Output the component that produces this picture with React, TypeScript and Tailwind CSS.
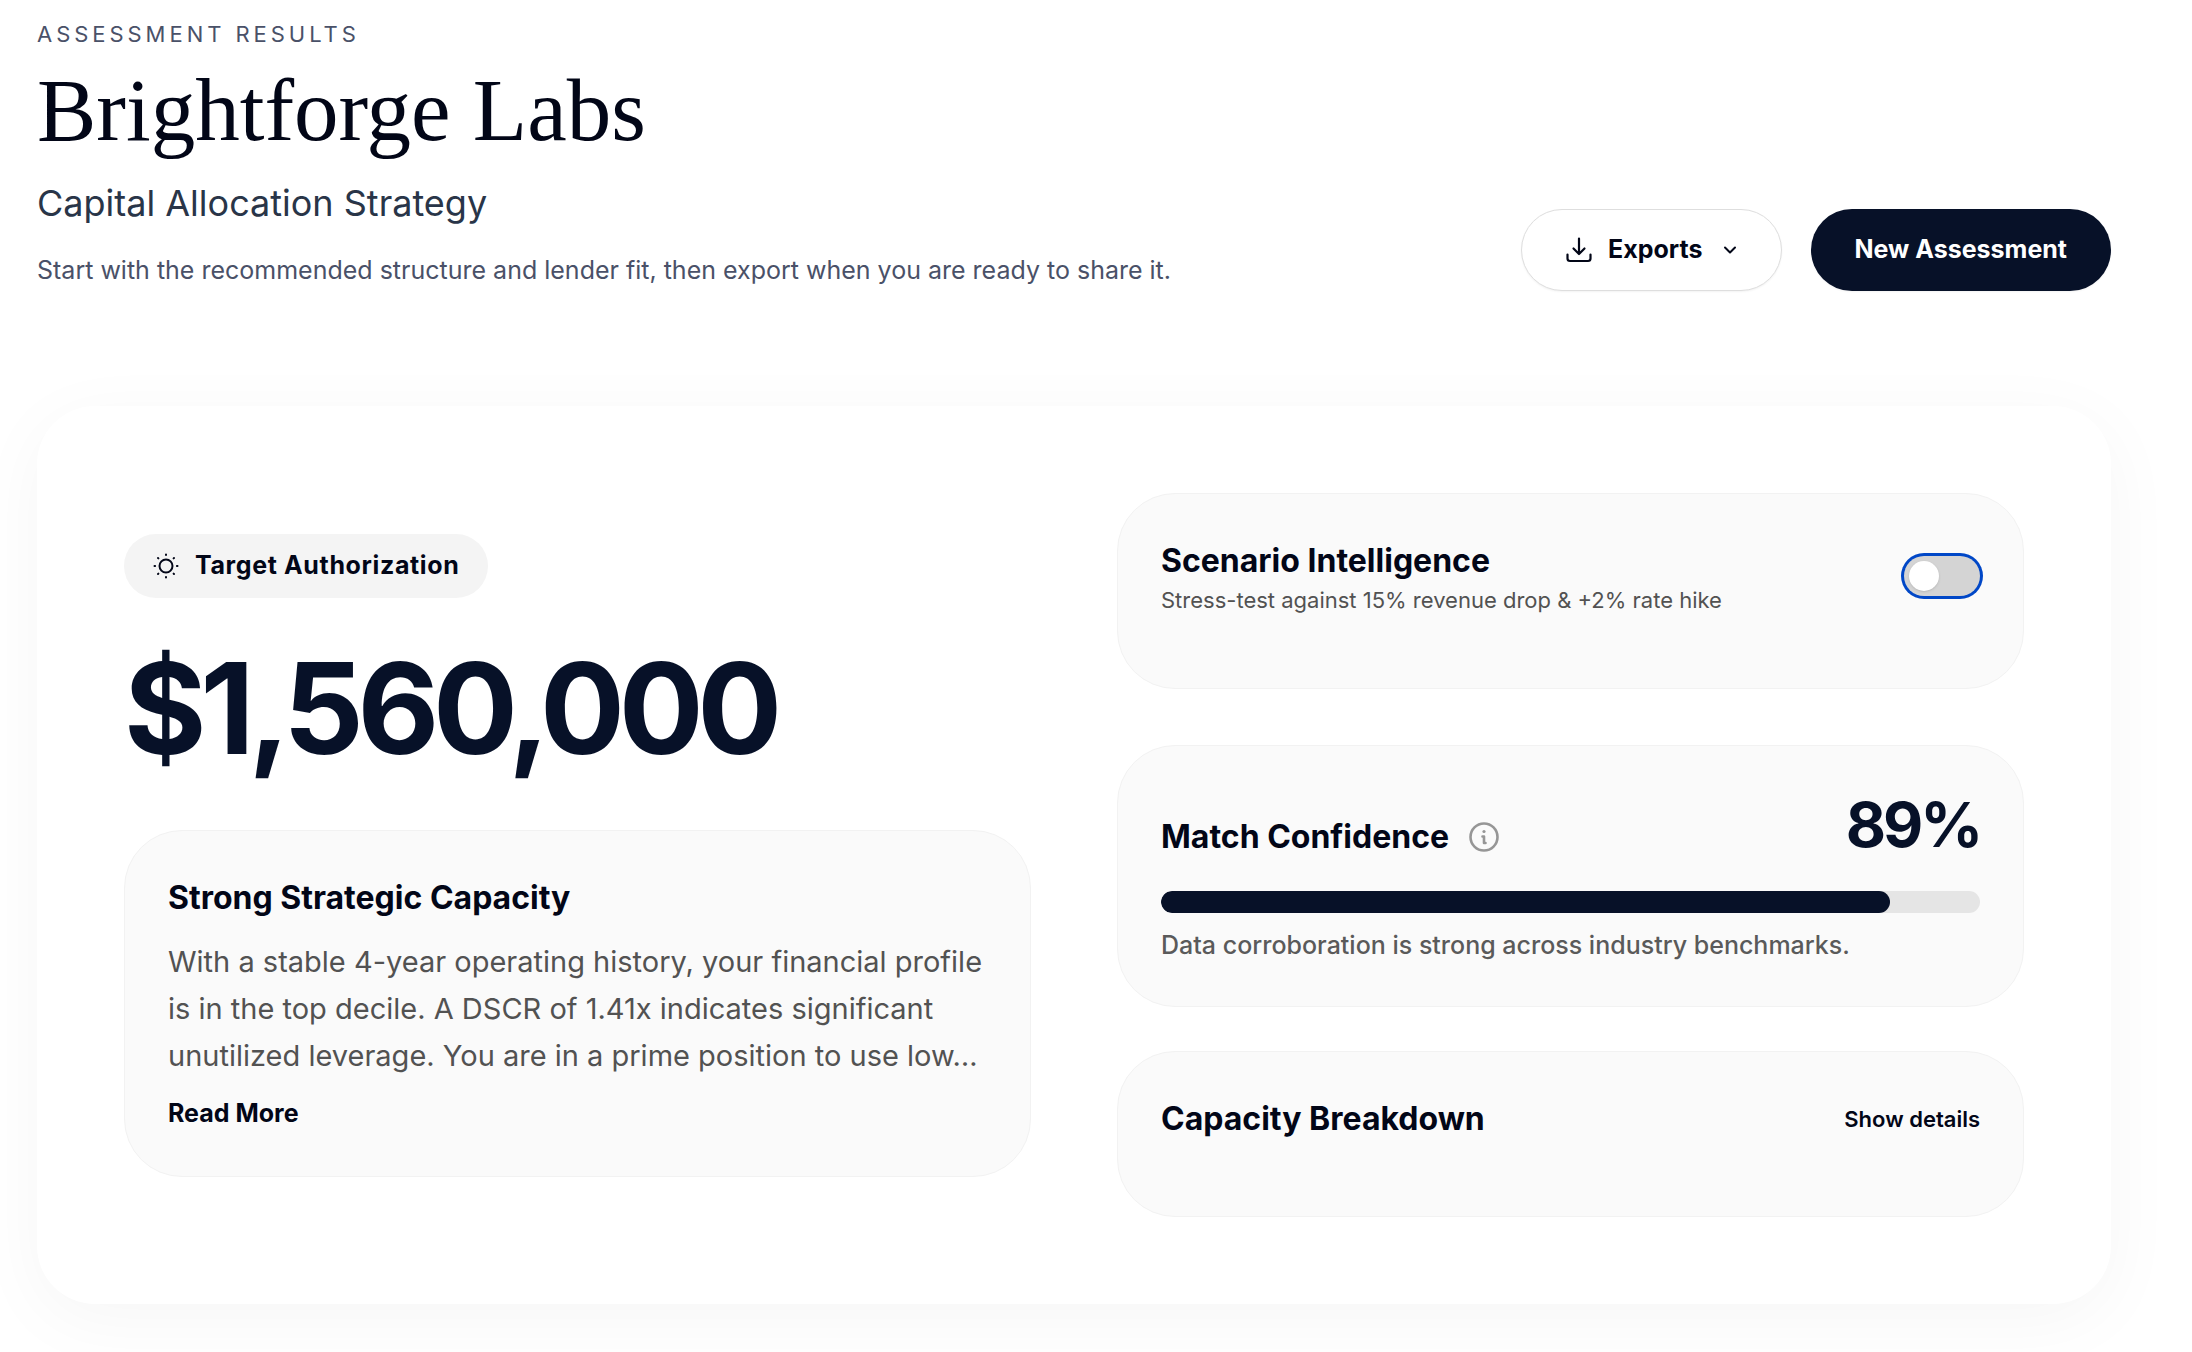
import React, { useState } from "react";

const cardClass = "rounded-[58px] border border-[#f2f2f2] bg-[#fafafa] p-[43px]";
const titleClass = "text-[32px] leading-12 font-bold text-[#020617]";

function DownloadIcon() {
    return (
        <svg viewBox="0 0 26 26" className="size-[26px]" fill="none" stroke="currentColor" strokeWidth="2.2" strokeLinecap="round" strokeLinejoin="round" aria-hidden="true">
            <path d="M13 1.5v15M7.5 11.5l5.5 5.5 5.5-5.5" />
            <path d="M1.5 17.5v4a2.5 2.5 0 0 0 2.5 2.5h18a2.5 2.5 0 0 0 2.5-2.5v-4" />
        </svg>
    );
}

function ChevronIcon() {
    return (
        <svg viewBox="0 0 14 14" className="size-3.5" fill="none" stroke="currentColor" strokeWidth="2" strokeLinecap="round" strokeLinejoin="round" aria-hidden="true">
            <path d="M2 4.5l5 5 5-5" />
        </svg>
    );
}

function SunIcon() {
    return (
        <svg viewBox="0 0 26 26" className="size-[26px]" fill="none" stroke="currentColor" strokeWidth="2" strokeLinecap="round" aria-hidden="true">
            <circle cx="13" cy="13" r="6.5" />
            <path d="M13 1.5v.6M13 23.9v.6M1.5 13h.6M23.9 13h.6M5 5l.4.4M20.6 20.6l.4.4M5 21l.4-.4M20.6 5.4l.4-.4" />
        </svg>
    );
}

function InfoIcon() {
    return (
        <svg viewBox="0 0 30 30" className="size-[30px]" fill="none" stroke="currentColor" strokeWidth="2.6" strokeLinecap="round" strokeLinejoin="round" aria-hidden="true">
            <circle cx="15" cy="15" r="13.5" />
            <path d="M13.5 14.5h1.5v6.5M15 21h1.5" />
            <circle cx="15" cy="9.5" r="1.6" fill="currentColor" stroke="none" />
        </svg>
    );
}

export default function App() {
    const [stress, setStress] = useState(false);
    const confidence = 89;

    return (
        <main className="min-h-screen overflow-hidden bg-white pt-[18px] pr-[81px] pb-11 pl-[37px] font-['Inter',sans-serif]">
            <header className="flex items-end justify-between">
                <div>
                    <p className="text-[22px] leading-8 tracking-[0.18em] text-[#4a5168] uppercase">Assessment Results</p>
                    <h1 className="mt-3 font-['Liberation_Serif',serif] text-[89px] leading-24 text-[#020617]">Brightforge Labs</h1>
                    <p className="mt-[19px] text-[36px] leading-[52px] text-[#293548]">Capital Allocation Strategy</p>
                    <p className="mt-5 text-[25px] leading-[42px] text-[#4a5168]">
                        Start with the recommended structure and lender fit, then export when you are ready to share it.
                    </p>
                </div>
                <div className="flex gap-[29px]">
                    <button type="button" className="flex h-[82px] items-center rounded-full border border-[#dedede] bg-white px-11 text-[25px] font-bold text-[#020617] shadow-xs">
                        <DownloadIcon />
                        <span className="mr-5 ml-4">Exports</span>
                        <ChevronIcon />
                    </button>
                    <button type="button" className="h-[82px] rounded-full bg-[#071128] px-11 text-[25px] font-bold text-white shadow-xs">
                        New Assessment
                    </button>
                </div>
            </header>

            <section className="mt-[115px] grid grid-cols-2 items-center gap-[86px] rounded-[58px] bg-white p-[87px] shadow-[0_15px_73px_rgba(0,0,0,0.04)]">
                <div>
                    <div className="inline-flex h-16 items-center gap-4 rounded-full bg-[#f4f4f4] px-[29px] text-[25px] font-bold tracking-wide text-[#020617]">
                        <SunIcon />
                        Target Authorization
                    </div>
                    <p className="mt-11 text-[126px] leading-[132px] font-bold tracking-tighter text-[#071128]">$1,560,000</p>
                    <article className={cardClass + " mt-14"}>
                        <h2 className={titleClass}>Strong Strategic Capacity</h2>
                        <p className="mt-4 line-clamp-3 text-[29px] leading-[47px] text-[#525252]">
                            With a stable 4-year operating history, your financial profile is in the top decile. A DSCR of 1.41x
                            indicates significant unutilized leverage. You are in a prime position to use low…
                        </p>
                        <button type="button" className="mt-3.5 block text-[25px] leading-10 font-bold text-[#020617]">Read More</button>
                    </article>
                </div>

                <div>
                    <article className={cardClass}>
                        <div className="mb-[30px] flex items-center justify-between">
                            <div>
                                <h2 className={titleClass}>Scenario Intelligence</h2>
                                <p className="text-[22px] leading-[30px] text-[#525252]" id="scenario-hint">
                                    Stress-test against 15% revenue drop &amp; +2% rate hike
                                </p>
                            </div>
                            <button
                                type="button"
                                role="switch"
                                aria-checked={stress}
                                aria-label="Scenario Intelligence"
                                aria-describedby="scenario-hint"
                                onClick={() => setStress(!stress)}
                                className="flex h-10 w-[76px] items-center rounded-full bg-[#d4d4d4] px-[5px] ring-3 ring-[#0047c7]"
                            >
                                <span className={stress ? "ml-auto size-[30px] rounded-full bg-white shadow-sm" : "size-[30px] rounded-full bg-white shadow-sm"} />
                            </button>
                        </div>
                    </article>

                    <article className={cardClass + " mt-14"}>
                        <div className="flex items-end justify-between">
                            <div className="flex items-center gap-5">
                                <h2 className={titleClass}>Match Confidence</h2>
                                <button type="button" aria-label="About match confidence" className="text-[#969696]">
                                    <InfoIcon />
                                </button>
                            </div>
                            <span className="text-[62px] leading-[72px] font-bold tracking-tighter text-[#071128]">{confidence}%</span>
                        </div>
                        <div className="mt-[30px] h-[22px] overflow-hidden rounded-full bg-[#e5e5e5]">
                            <div className="h-full rounded-full bg-[#071128]" style={{ width: `${confidence}%` }} />
                        </div>
                        <p className="mt-3.5 text-[25px] leading-9 font-medium text-[#5a5a5a]">
                            Data corroboration is strong across industry benchmarks.
                        </p>
                    </article>

                    <article className={cardClass + " mt-11"}>
                        <div className="mb-[30px] flex items-center justify-between">
                            <h2 className={titleClass}>Capacity Breakdown</h2>
                            <button type="button" className="text-[22px] font-semibold text-[#020617]">Show details</button>
                        </div>
                    </article>
                </div>
            </section>
        </main>
    );
}
